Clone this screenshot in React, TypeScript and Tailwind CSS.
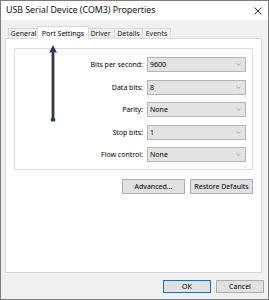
import { ChevronDown } from "lucide-react";

const font = { fontFamily: '"Noto Sans", "Open Sans", sans-serif' };

const rows = [
  { label: "Bits per second:", value: "9600" },
  { label: "Data bits:", value: "8" },
  { label: "Parity:", value: "None" },
  { label: "Stop bits:", value: "1" },
  { label: "Flow control:", value: "None" },
];

const tabs = ["General", "Port Settings", "Driver", "Details", "Events"];
const tabWidths: Record<string, string> = {
  General: "w-[31px]",
  "Port Settings": "w-[52px]",
  Driver: "w-[29px]",
  Details: "w-[29px]",
  Events: "w-[29px]",
};

function Select({ value }: { value: string }) {
  return (
    <div className="w-[99px] h-[15px] bg-[#e3e3e3] border border-[#b4b4b4] flex items-center justify-between pl-[2px] pr-[3px]">
      <span className="text-[7px] leading-none text-black">{value}</span>
      <ChevronDown className="w-[7px] h-[7px] text-[#666]" strokeWidth={1.5} />
    </div>
  );
}

function Button({ label, w, h = "h-[15px]", primary = false }: { label: string; w: string; h?: string; primary?: boolean }) {
  return (
    <div
      className={`${w} ${h} flex items-center justify-center bg-[#e1e1e1] text-[7px] leading-none text-black border ${
        primary ? "border-[#0078d7]" : "border-[#adadad]"
      }`}
    >
      {label}
    </div>
  );
}

export default function App() {
  return (
    <div
      className="relative w-[269px] h-[300px] bg-[#f0f0f0] border border-[#7c7c7c] flex flex-col overflow-hidden"
      style={font}
    >
      {/* Title bar */}
      <div className="h-[19px] bg-white flex items-center justify-between pl-[5px] pr-[6px] shrink-0">
        <span className="text-[8.8px] leading-none text-[#111]">USB Serial Device (COM3) Properties</span>
        <svg width="8" height="8" viewBox="0 0 8 8" className="text-[#333]">
          <path d="M0.5 0.5 L7.5 7.5 M7.5 0.5 L0.5 7.5" stroke="currentColor" strokeWidth="1" />
        </svg>
      </div>

      {/* Tabs */}
      <div className="mt-[6px] ml-[7px] h-[12px] flex items-end">
        {tabs.map((t) =>
          t === "Port Settings" ? (
            <div
              key={t}
              className={`${tabWidths[t]} -mx-[2px] h-[13px] -mb-px relative z-10 bg-white border border-b-0 border-[#d9d9d9] flex items-center justify-center text-[7px] leading-none text-black whitespace-nowrap`}
            >
              {t}
            </div>
          ) : (
            <div
              key={t}
              className={`${tabWidths[t]} h-[10px] bg-[#f0f0f0] border border-b-0 border-[#d9d9d9] -ml-px first:ml-0 flex items-center justify-center text-[7px] leading-none text-[#222] whitespace-nowrap`}
            >
              {t}
            </div>
          )
        )}
      </div>

      {/* Panel */}
      <div className="ml-[4px] w-[257px] h-[235px] bg-white border border-[#d9d9d9] pt-[9px] px-[8px] flex flex-col">
        <div className="border border-[#dcdcdc] pt-[8px] pb-[7px] pr-[6px] flex flex-col gap-[7.5px]">
          {rows.map((r) => (
            <div key={r.label} className="flex items-center justify-end gap-[4px]">
              <span className="text-[7px] leading-none text-black">{r.label}</span>
              <Select value={r.value} />
            </div>
          ))}
        </div>
        <div className="mt-[9px] flex justify-end gap-[5px]">
          <Button label="Advanced..." w="w-[63px]" />
          <Button label="Restore Defaults" w="w-[63px]" />
        </div>
      </div>

      {/* Footer */}
      <div className="mt-[7px] pr-[4px] flex justify-end gap-[5px]">
        <Button label="OK" w="w-[48px]" h="h-[13px]" primary />
        <Button label="Cancel" w="w-[48px]" h="h-[13px]" />
      </div>

      {/* Annotation arrow */}
      <svg className="absolute left-[46px] top-[43px]" width="12" height="80" viewBox="0 0 12 80">
        <path d="M6 1 L10 9 L7.4 8 L7.4 76 L4.6 76 L4.6 8 L2 9 Z" fill="#2b3853" />
        <rect x="3.8" y="74" width="4.4" height="3.5" rx="1.2" fill="#2b3853" />
      </svg>
    </div>
  );
}
